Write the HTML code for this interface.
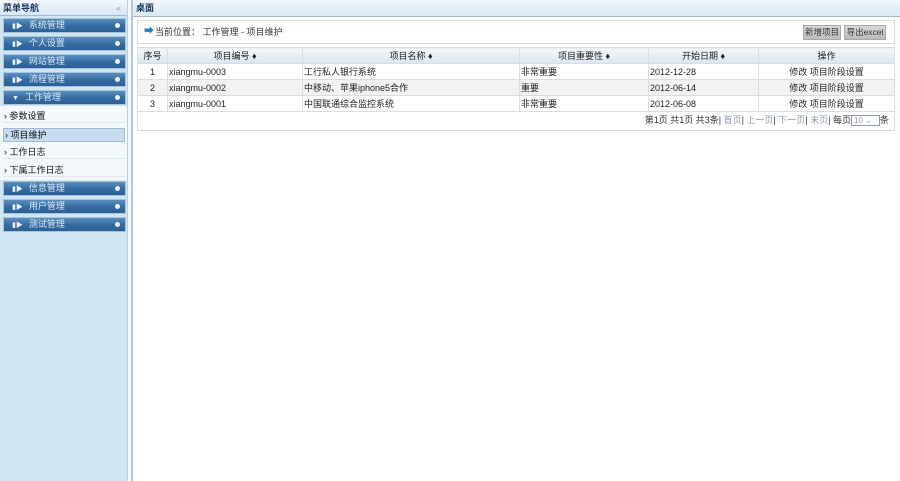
<!DOCTYPE html>
<html><head><meta charset="utf-8"><style>
*{margin:0;padding:0;box-sizing:border-box}
body{width:900px;height:481px;overflow:hidden;background:#fff;font-family:"Liberation Sans","Noto Sans CJK SC",sans-serif;font-size:9px;color:#222;position:relative}
.side{position:absolute;left:0;top:0;width:128px;height:481px;background:#cfe6f0;border-right:1px solid #b9cfe0}
.sbar{position:absolute;left:128px;top:0;width:5px;height:481px;background:#f4f8fb;border-right:2px solid #b5c7e0}
.stitle{height:16px;background:linear-gradient(#f2f7fc,#d9e7f5);border-bottom:1px solid #9fb8d4;font-weight:bold;font-size:9px;color:#14355c;line-height:16px;padding-left:3px;position:relative}
.stitle span{position:absolute;right:6px;top:0;color:#8aa5c5;font-weight:normal}
.m{position:absolute;left:3px;width:123px;height:15px;background:linear-gradient(#5b8fbf,#356aa0 55%,#2c5f95);border:1px solid #a7c4dc;color:#dce9f5;line-height:13px;padding-left:8px;font-size:9px}
.m:after{content:"";position:absolute;right:5px;top:4px;width:5px;height:5px;border-radius:50%;background:#eef4fa}
.m b{font-weight:normal;font-size:7px;margin-right:6px;color:#e8f0f8}
.sub{position:absolute;left:0;top:106px;width:127px;height:74px;background:#f3f8fb}
.si{position:absolute;left:3px;font-size:9px;color:#111;line-height:12px;width:122px;padding-left:1px}
.si.on{background:#c8dcef;border:1px solid #9fbbd8}
.si.l{border-bottom:1px solid #dde8f0}
.mh{position:absolute;left:133px;top:0;width:767px;height:17px;background:linear-gradient(#f2f7fc,#d9e7f5);border-bottom:1px solid #9fb8d4;font-weight:bold;line-height:16px;padding-left:3px;color:#14355c}
.crumb{position:absolute;left:137px;top:20px;width:758px;height:24px;border:1px solid #d3dbe3;line-height:22px;padding-left:17px;color:#333}
.crumb i{position:absolute;left:6px;top:0;color:#2a7bc0;font-style:normal;font-size:10px}
.btn{position:absolute;top:4px;height:15px;border:1px solid #a9a9a9;background:linear-gradient(#d8d8d8,#bcbcbc);line-height:13px;color:#333;text-align:center;overflow:hidden;white-space:nowrap;font-size:8.5px}
table{position:absolute;left:137px;top:47px;width:758px;border-collapse:collapse}
td,th{height:16px;border:1px solid #d6dde4;font-size:9px;padding:0 1px;font-weight:normal}
th{background:linear-gradient(#f3f6f9,#dce5ee);color:#222;text-align:center}
tr.g td{background:#f2f2f2}
.pg{position:absolute;left:137px;top:111px;width:758px;height:20px;border:1px solid #d3dbe3;border-top:none;text-align:right;line-height:19px;padding-right:5px;color:#333}
.pg span{color:#8a9ab0}
.sel{display:inline-block;width:29px;height:11px;border:1px solid #7f9db9;line-height:9px;text-align:left;padding-left:2px;vertical-align:middle;font-size:8px;color:#000;background:#fff}
</style></head><body>
<div class="side">
<div class="stitle">菜单导航<span>«</span></div>
</div>
<div class="m" style="top:18px"><b>▮▶</b>系统管理</div>
<div class="m" style="top:36px"><b>▮▶</b>个人设置</div>
<div class="m" style="top:54px"><b>▮▶</b>网站管理</div>
<div class="m" style="top:72px"><b>▮▶</b>流程管理</div>
<div class="m" style="top:90px"><b>▼</b>工作管理</div>
<div class="sub"></div>
<div class="si l" style="top:110px">› 参数设置</div>
<div class="si on" style="top:128px;left:3px">› 项目维护</div>
<div class="si l" style="top:146px">› 工作日志</div>
<div class="si l" style="top:164px">› 下属工作日志</div>
<div class="m" style="top:181px"><b>▮▶</b>信息管理</div>
<div class="m" style="top:199px"><b>▮▶</b>用户管理</div>
<div class="m" style="top:217px"><b>▮▶</b>测试管理</div>
<div class="sbar"></div>
<div class="mh">桌面</div>
<div class="crumb"><i>➡</i>当前位置： 工作管理 - 项目维护
<div class="btn" style="left:665px;width:38px">新增项目</div><div class="btn" style="left:706px;width:42px">导出excel</div></div>
<table>
<tr><th style="width:30px">序号</th><th style="width:135px">项目编号 ♦</th><th style="width:217px">项目名称 ♦</th><th style="width:129px">项目重要性 ♦</th><th style="width:110px">开始日期 ♦</th><th>操作</th></tr>
<tr><td align="center">1</td><td>xiangmu-0003</td><td>工行私人银行系统</td><td>非常重要</td><td>2012-12-28</td><td align="center">修改 项目阶段设置</td></tr>
<tr class="g"><td align="center">2</td><td>xiangmu-0002</td><td>中移动、苹果iphone5合作</td><td>重要</td><td>2012-06-14</td><td align="center">修改 项目阶段设置</td></tr>
<tr><td align="center">3</td><td>xiangmu-0001</td><td>中国联通综合监控系统</td><td>非常重要</td><td>2012-06-08</td><td align="center">修改 项目阶段设置</td></tr>
</table>
<div class="pg">第1页 共1页 共3条| <span>首页</span>| <span>上一页</span>| <span>下一页</span>| <span>末页</span>| 每页<span class="sel">10 ⌄</span>条</div>
</body></html>
